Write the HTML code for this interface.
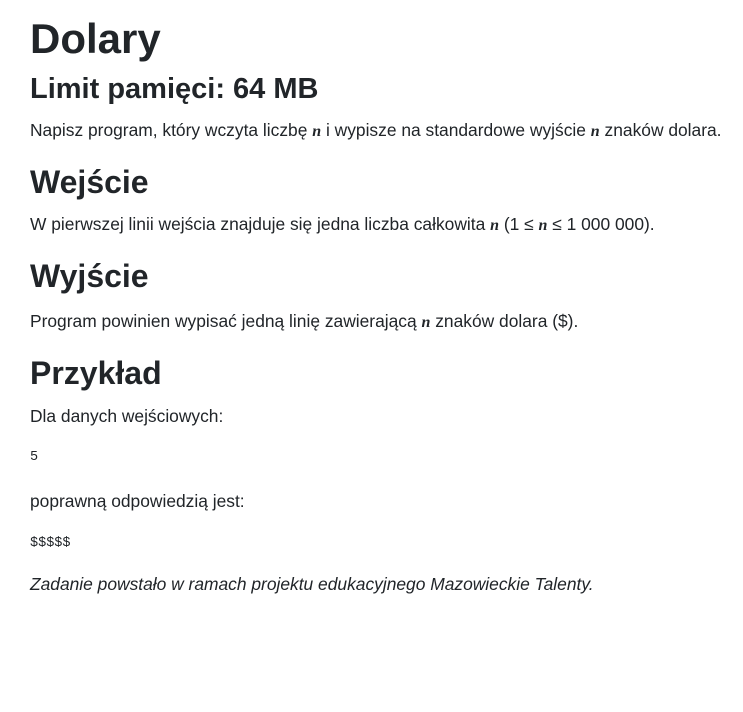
<!DOCTYPE html>
<html><head><meta charset="utf-8"><style>
body{margin:0;width:743px;height:712px;background:#fff;color:#212529;font-family:"Liberation Sans",sans-serif;position:relative;overflow:hidden}
div{position:absolute;left:30px;white-space:nowrap}
.h1{font-size:42px;font-weight:bold;top:15px}
.h2{font-size:29px;font-weight:bold;top:73px}
.h3{font-size:32px;font-weight:bold}
.p{font-size:17.4px;letter-spacing:0}
.m{font-family:"Liberation Serif",serif;font-style:italic;font-weight:bold;font-size:16px}
.c{font-family:"Liberation Mono",monospace;font-size:13.5px}
</style></head><body>
<div class="h1">Dolary</div>
<div class="h2">Limit pamięci: 64 MB</div>
<div class="p" style="top:120px">Napisz program, który wczyta liczbę <span class="m">n</span> i wypisze na standardowe wyjście <span class="m">n</span> znaków dolara.</div>
<div class="h3" style="top:164px">Wejście</div>
<div class="p" style="top:214px">W pierwszej linii wejścia znajduje się jedna liczba całkowita <span class="m">n</span> (1 ≤ <span class="m">n</span> ≤ 1 000 000).</div>
<div class="h3" style="top:258px">Wyjście</div>
<div class="p" style="top:311px">Program powinien wypisać jedną linię zawierającą <span class="m">n</span> znaków dolara ($).</div>
<div class="h3" style="top:355px">Przykład</div>
<div class="p" style="top:406px">Dla danych wejściowych:</div>
<div class="c" style="top:450px">5</div>
<div class="p" style="top:491px">poprawną odpowiedzią jest:</div>
<div class="c" style="top:536px">$$$$$</div>
<div class="p" style="top:574px;font-style:italic">Zadanie powstało w ramach projektu edukacyjnego Mazowieckie Talenty.</div>
</body></html>
